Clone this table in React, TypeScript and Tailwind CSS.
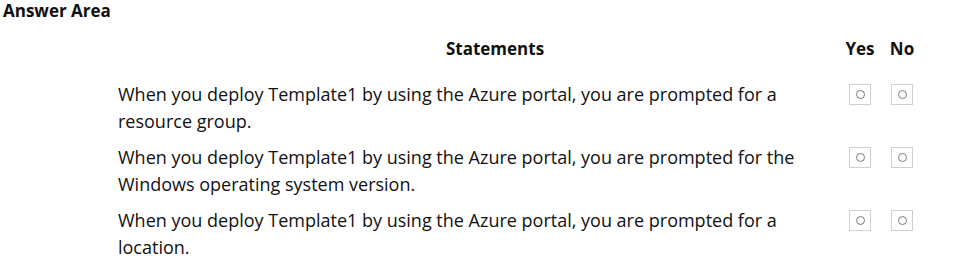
import React from "react";

const statements = [
    "When you deploy Template1 by using the Azure portal, you are prompted for a resource group.",
    "When you deploy Template1 by using the Azure portal, you are prompted for the Windows operating system version.",
    "When you deploy Template1 by using the Azure portal, you are prompted for a location.",
];

const RadioBox: React.FC = () => (
    <div className="w-[22px] h-[21px] border border-[#cfcfcf] bg-white flex items-center justify-center">
        <div className="w-[9px] h-[9px] rounded-full border-[1.5px] border-[#7a7a7a]" />
    </div>
);

export default function App() {
    return (
        <div
            className="w-[962px] h-[258px] bg-white text-[#111] overflow-hidden"
            style={{ fontFamily: '"Open Sans", "Noto Sans", sans-serif' }}
        >
            <div className="pl-[3px] text-[17px] font-bold leading-[22px]">Answer Area</div>

            <div className="pl-[118px] mt-[16px]">
                {/* header */}
                <div className="flex items-center h-[22px] text-[17px] font-bold">
                    <div className="w-[720px] pl-[34px] text-center">Statements</div>
                    <div className="w-[44px] text-center">Yes</div>
                    <div className="w-[40px] text-center">No</div>
                </div>

                {/* rows */}
                <div className="mt-[21px] flex flex-col gap-[9px]">
                    {statements.map((s, i) => (
                        <div key={i} className="flex items-start">
                            <div className="w-[720px] pr-[20px] text-[18px] leading-[27px]">{s}</div>
                            <div className="w-[44px] flex justify-center pt-[3px]">
                                <RadioBox />
                            </div>
                            <div className="w-[40px] flex justify-center pt-[3px]">
                                <RadioBox />
                            </div>
                        </div>
                    ))}
                </div>
            </div>
        </div>
    );
}
